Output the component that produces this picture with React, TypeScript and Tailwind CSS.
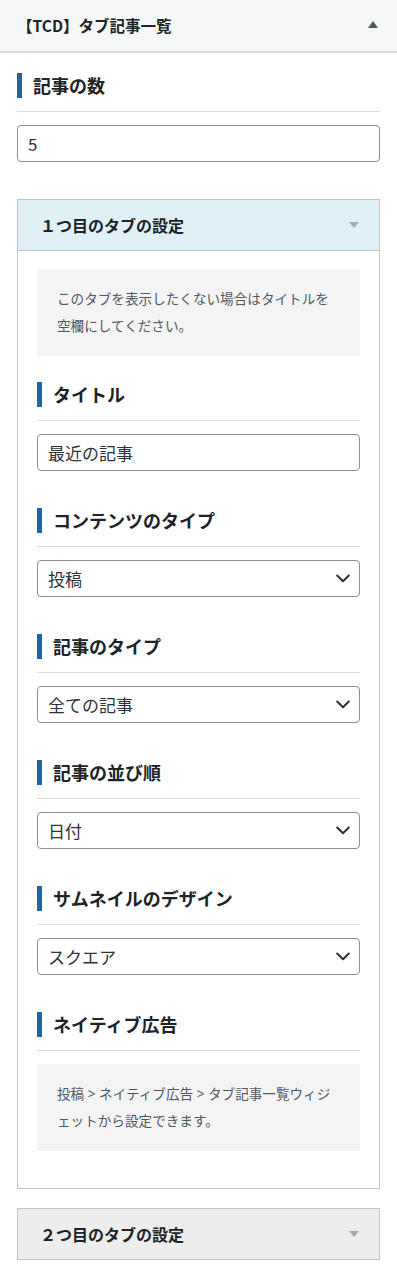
const font = { fontFamily: '"Noto Sans CJK JP", "Noto Sans", sans-serif' };

function Heading({ label, className = "" }: { label: string; className?: string }) {
  return (
    <div className={`flex items-center gap-[11px] border-b border-[#dcdcde] pb-[13px] ${className}`}>
      <span className="h-[25px] w-[5px] bg-[#1f64a5]" />
      <span className="text-[18px] font-bold leading-[25px] text-[#1d2327]">{label}</span>
    </div>
  );
}

function TextField({ value }: { value: string }) {
  return (
    <div className="mt-[13px] flex h-[37px] items-center rounded-[4px] border border-[#8c8f94] px-[10px] text-[17px] text-[#2c3338]">
      {value}
    </div>
  );
}

function Chevron() {
  return (
    <svg width="14" height="9" viewBox="0 0 14 9" fill="none" className="text-[#2c3338]">
      <path d="M1.2 1.5 7 7.2l5.8-5.7" stroke="currentColor" strokeWidth="2" strokeLinecap="round" strokeLinejoin="round" />
    </svg>
  );
}

function SelectField({ value }: { value: string }) {
  return (
    <div className="mt-[13px] flex h-[37px] items-center justify-between rounded-[4px] border border-[#8c8f94] pl-[10px] pr-[9px] text-[17px] text-[#2c3338]">
      <span>{value}</span>
      <Chevron />
    </div>
  );
}

function Note({ children }: { children: React.ReactNode }) {
  return (
    <div className="bg-[#f4f4f4] px-[20px] pb-[17px] pt-[16px] text-[13.6px] leading-[27px] text-[#50575e]">
      {children}
    </div>
  );
}

function Gt() {
  return <span style={{ fontFamily: '"Open Sans", sans-serif' }}> &gt; </span>;
}

function TriangleDown({ color }: { color: string }) {
  return <span className={`h-0 w-0 border-x-[5px] border-t-[6px] border-x-transparent ${color}`} />;
}

const selects = [
  ["コンテンツのタイプ", "投稿"],
  ["記事のタイプ", "全ての記事"],
  ["記事の並び順", "日付"],
  ["サムネイルのデザイン", "スクエア"],
];

export default function App() {
  return (
    <div className="min-h-[1277px] w-[397px] bg-white" style={font}>
      <div className="flex h-[53px] items-center justify-between border-b-2 border-[#dcdcde] bg-[#f6f7f7] pl-[17px] pr-[19px]">
        <span className="text-[15.5px] font-bold text-[#1d2327]">【TCD】タブ記事一覧</span>
        <span className="mb-[2px] h-0 w-0 border-x-[5px] border-b-[7px] border-x-transparent border-b-[#50575e]" />
      </div>

      <div className="px-[17px] pb-[17px]">
        <Heading label="記事の数" className="mt-[20px]" />
        <TextField value="5" />

        <div className="mt-[37px] border border-[#c3c4c7]">
          <div className="flex h-[51px] items-center justify-between border-b border-[#c3c4c7] bg-[#dff0f7] pl-[22px] pr-[20px]">
            <span className="text-[16px] font-bold text-[#1d2327]">１つ目のタブの設定</span>
            <TriangleDown color="border-t-[#a7aaad]" />
          </div>
          <div className="px-[19px] pb-[37px] pt-[18px]">
            <Note>
              このタブを表示したくない場合はタイトルを
              <br />
              空欄にしてください。
            </Note>
            <Heading label="タイトル" className="mt-[26px]" />
            <TextField value="最近の記事" />
            {selects.map(([label, value]) => (
              <div key={label}>
                <Heading label={label} className="mt-[37px]" />
                <SelectField value={value} />
              </div>
            ))}
            <Heading label="ネイティブ広告" className="mt-[37px]" />
            <div className="mt-[13px]">
              <Note>
                投稿<Gt />ネイティブ広告<Gt />タブ記事一覧ウィジ
                <br />
                ェットから設定できます。
              </Note>
            </div>
          </div>
        </div>

        <div className="mt-[19px] flex h-[52px] items-center justify-between border border-[#c3c4c7] bg-[#ededed] pl-[22px] pr-[20px]">
          <span className="text-[16px] font-bold text-[#1d2327]">２つ目のタブの設定</span>
          <TriangleDown color="border-t-[#a7aaad]" />
        </div>
      </div>
    </div>
  );
}
